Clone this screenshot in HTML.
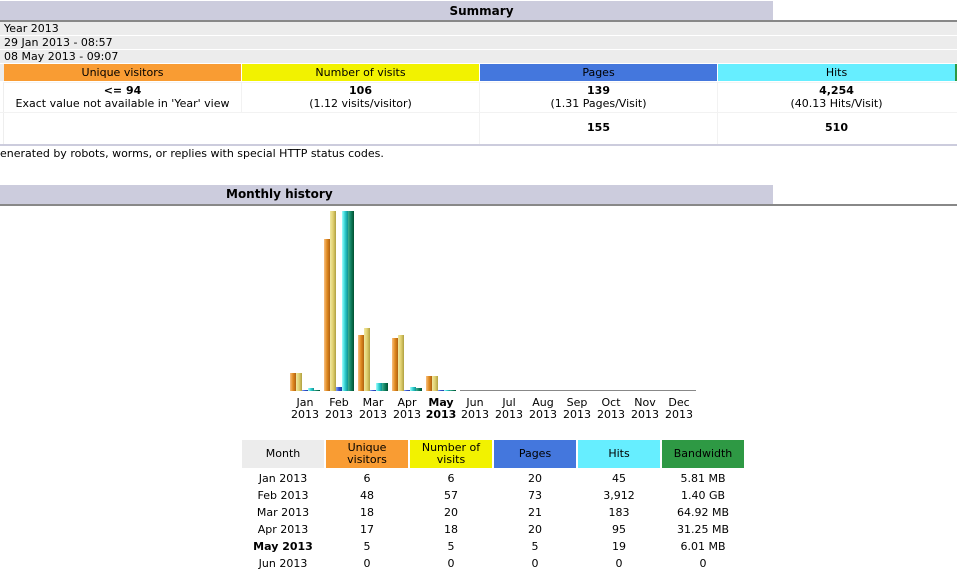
<!DOCTYPE html>
<html><head><meta charset="utf-8"><style>
*{margin:0;padding:0;box-sizing:border-box}
body{width:957px;height:575px;background:#fff;font-family:"DejaVu Sans","Liberation Sans",sans-serif;font-size:10px;color:#000;position:relative;overflow:hidden}
.a{position:absolute}
.hd{background:#ccccdd;font-weight:bold;font-size:12px;text-align:center}
.c{text-align:center}
.b{font-weight:bold}
.bar{position:absolute;width:6px;bottom:184px}
.u{background:linear-gradient(90deg,#f8c080,#e08a20 50%,#b06010)}
.v{background:linear-gradient(90deg,#f0e8a0,#e0d070 50%,#b0a040)}
.p{background:linear-gradient(90deg,#80a0f0,#3050d0 50%,#2040a0)}
.h{background:linear-gradient(90deg,#a0ffff,#30d0d0 50%,#109090)}
.w{background:linear-gradient(90deg,#40b090,#108060 50%,#005030)}
.ml{position:absolute;top:397px;width:34px;text-align:center;line-height:12px;font-size:11px}
.tr{position:absolute;left:242px;width:503px;height:17px;line-height:17px;font-size:11px}
.tr span{position:absolute;width:82px;text-align:center}
</style></head><body>
<div class="a hd" style="left:0;top:1px;width:773px;height:20px;line-height:20px;padding-left:190px">Summary</div>
<div class="a" style="left:0;top:20px;width:957px;height:2px;background:#888"></div>
<div class="a" style="left:0;top:22px;width:957px;height:13px;background:#ececec;padding-left:4px;line-height:13px;font-size:11px">Year 2013</div>
<div class="a" style="left:0;top:36px;width:957px;height:13px;background:#ececec;padding-left:4px;line-height:13px;font-size:11px">29 Jan 2013 - 08:57</div>
<div class="a" style="left:0;top:50px;width:957px;height:13px;background:#ececec;padding-left:4px;line-height:13px;font-size:11px">08 May 2013 - 09:07</div>
<div class="a" style="left:0;top:64px;width:4px;height:17px;background:#ececec"></div>
<div class="a c" style="left:4px;top:64px;width:237px;height:17px;line-height:17px;background:#f99c33;font-size:11px">Unique visitors</div>
<div class="a c" style="left:242px;top:64px;width:237px;height:17px;line-height:17px;background:#f2f200;font-size:11px">Number of visits</div>
<div class="a c" style="left:480px;top:64px;width:237px;height:17px;line-height:17px;background:#4477dd;font-size:11px">Pages</div>
<div class="a c" style="left:718px;top:64px;width:237px;height:17px;line-height:17px;background:#66eeff;font-size:11px">Hits</div>
<div class="a" style="left:955px;top:64px;width:2px;height:17px;background:#2e9944"></div>
<div class="a" style="left:3px;top:82px;width:954px;height:62px;border-left:1px solid #eee;border-top:1px solid #f4f4f4"></div>
<div class="a" style="left:0;top:112px;width:957px;height:1px;background:#f2f2f2"></div>
<div class="a" style="left:241px;top:82px;width:1px;height:30px;background:#f2f2f2"></div>
<div class="a" style="left:479px;top:82px;width:1px;height:62px;background:#f2f2f2"></div>
<div class="a" style="left:717px;top:82px;width:1px;height:62px;background:#f2f2f2"></div>
<div class="a c" style="left:4px;top:84px;width:237px;line-height:13px;font-size:11px"><b>&lt;= 94</b><br>Exact value not available in 'Year' view</div>
<div class="a c" style="left:242px;top:84px;width:237px;line-height:13px;font-size:11px"><b>106</b><br>(1.12 visits/visitor)</div>
<div class="a c" style="left:480px;top:84px;width:237px;line-height:13px;font-size:11px"><b>139</b><br>(1.31 Pages/Visit)</div>
<div class="a c" style="left:718px;top:84px;width:237px;line-height:13px;font-size:11px"><b>4,254</b><br>(40.13 Hits/Visit)</div>
<div class="a c b" style="left:480px;top:121px;width:237px;font-size:11px">155</div>
<div class="a c b" style="left:718px;top:121px;width:237px;font-size:11px">510</div>
<div class="a" style="left:0;top:144px;width:957px;height:2px;background:#ccccdd"></div>
<div class="a" style="left:0;top:147px;font-size:11px;line-height:13px">enerated by robots, worms, or replies with special HTTP status codes.</div>
<div class="a hd" style="left:0;top:185px;width:773px;height:19px;line-height:19px;padding-left:0;text-indent:0"><span style="position:absolute;left:226px">Monthly history</span></div>
<div class="a" style="left:0;top:204px;width:957px;height:2px;background:#888"></div>

<!-- bars -->
<div class="bar u" style="left:290px;height:18px"></div><div class="bar v" style="left:296px;height:18px"></div><div class="bar p" style="left:302px;height:1px"></div><div class="bar h" style="left:308px;height:3px"></div><div class="bar w" style="left:314px;height:1px"></div>
<div class="bar u" style="left:324px;height:152px"></div><div class="bar v" style="left:330px;height:180px"></div><div class="bar p" style="left:336px;height:4px"></div><div class="bar h" style="left:342px;height:180px"></div><div class="bar w" style="left:348px;height:180px"></div>
<div class="bar u" style="left:358px;height:56px"></div><div class="bar v" style="left:364px;height:63px"></div><div class="bar p" style="left:370px;height:1px"></div><div class="bar h" style="left:376px;height:8px"></div><div class="bar w" style="left:382px;height:8px"></div>
<div class="bar u" style="left:392px;height:53px"></div><div class="bar v" style="left:398px;height:56px"></div><div class="bar p" style="left:404px;height:1px"></div><div class="bar h" style="left:410px;height:4px"></div><div class="bar w" style="left:416px;height:3px"></div>
<div class="bar u" style="left:426px;height:15px"></div><div class="bar v" style="left:432px;height:15px"></div><div class="bar p" style="left:438px;height:1px"></div><div class="bar h" style="left:444px;height:1px"></div><div class="bar w" style="left:450px;height:1px"></div>
<div class="a" style="left:460px;top:390px;width:236px;height:1px;background:#888"></div>

<div class="ml" style="left:288px">Jan<br>2013</div>
<div class="ml" style="left:322px">Feb<br>2013</div>
<div class="ml" style="left:356px">Mar<br>2013</div>
<div class="ml" style="left:390px">Apr<br>2013</div>
<div class="ml b" style="left:424px">May<br>2013</div>
<div class="ml" style="left:458px">Jun<br>2013</div>
<div class="ml" style="left:492px">Jul<br>2013</div>
<div class="ml" style="left:526px">Aug<br>2013</div>
<div class="ml" style="left:560px">Sep<br>2013</div>
<div class="ml" style="left:594px">Oct<br>2013</div>
<div class="ml" style="left:628px">Nov<br>2013</div>
<div class="ml" style="left:662px">Dec<br>2013</div>

<div class="a c" style="left:242px;top:440px;width:82px;height:28px;line-height:28px;background:#ececec;font-size:11px">Month</div>
<div class="a c" style="left:326px;top:440px;width:82px;height:28px;padding-top:2px;line-height:12px;background:#f99c33;font-size:11px">Unique<br>visitors</div>
<div class="a c" style="left:410px;top:440px;width:82px;height:28px;padding-top:2px;line-height:12px;background:#f2f200;font-size:11px">Number of<br>visits</div>
<div class="a c" style="left:494px;top:440px;width:82px;height:28px;line-height:28px;background:#4477dd;font-size:11px">Pages</div>
<div class="a c" style="left:578px;top:440px;width:82px;height:28px;line-height:28px;background:#66eeff;font-size:11px">Hits</div>
<div class="a c" style="left:662px;top:440px;width:82px;height:28px;line-height:28px;background:#2e9944;font-size:11px">Bandwidth</div>

<div class="tr" style="top:470px"><span style="left:0">Jan 2013</span><span style="left:84px">6</span><span style="left:168px">6</span><span style="left:252px">20</span><span style="left:336px">45</span><span style="left:420px">5.81 MB</span></div>
<div class="tr" style="top:487px"><span style="left:0">Feb 2013</span><span style="left:84px">48</span><span style="left:168px">57</span><span style="left:252px">73</span><span style="left:336px">3,912</span><span style="left:420px">1.40 GB</span></div>
<div class="tr" style="top:504px"><span style="left:0">Mar 2013</span><span style="left:84px">18</span><span style="left:168px">20</span><span style="left:252px">21</span><span style="left:336px">183</span><span style="left:420px">64.92 MB</span></div>
<div class="tr" style="top:521px"><span style="left:0">Apr 2013</span><span style="left:84px">17</span><span style="left:168px">18</span><span style="left:252px">20</span><span style="left:336px">95</span><span style="left:420px">31.25 MB</span></div>
<div class="tr" style="top:538px"><span style="left:0;font-weight:bold">May 2013</span><span style="left:84px">5</span><span style="left:168px">5</span><span style="left:252px">5</span><span style="left:336px">19</span><span style="left:420px">6.01 MB</span></div>
<div class="tr" style="top:555px"><span style="left:0">Jun 2013</span><span style="left:84px">0</span><span style="left:168px">0</span><span style="left:252px">0</span><span style="left:336px">0</span><span style="left:420px">0</span></div>
</body></html>
